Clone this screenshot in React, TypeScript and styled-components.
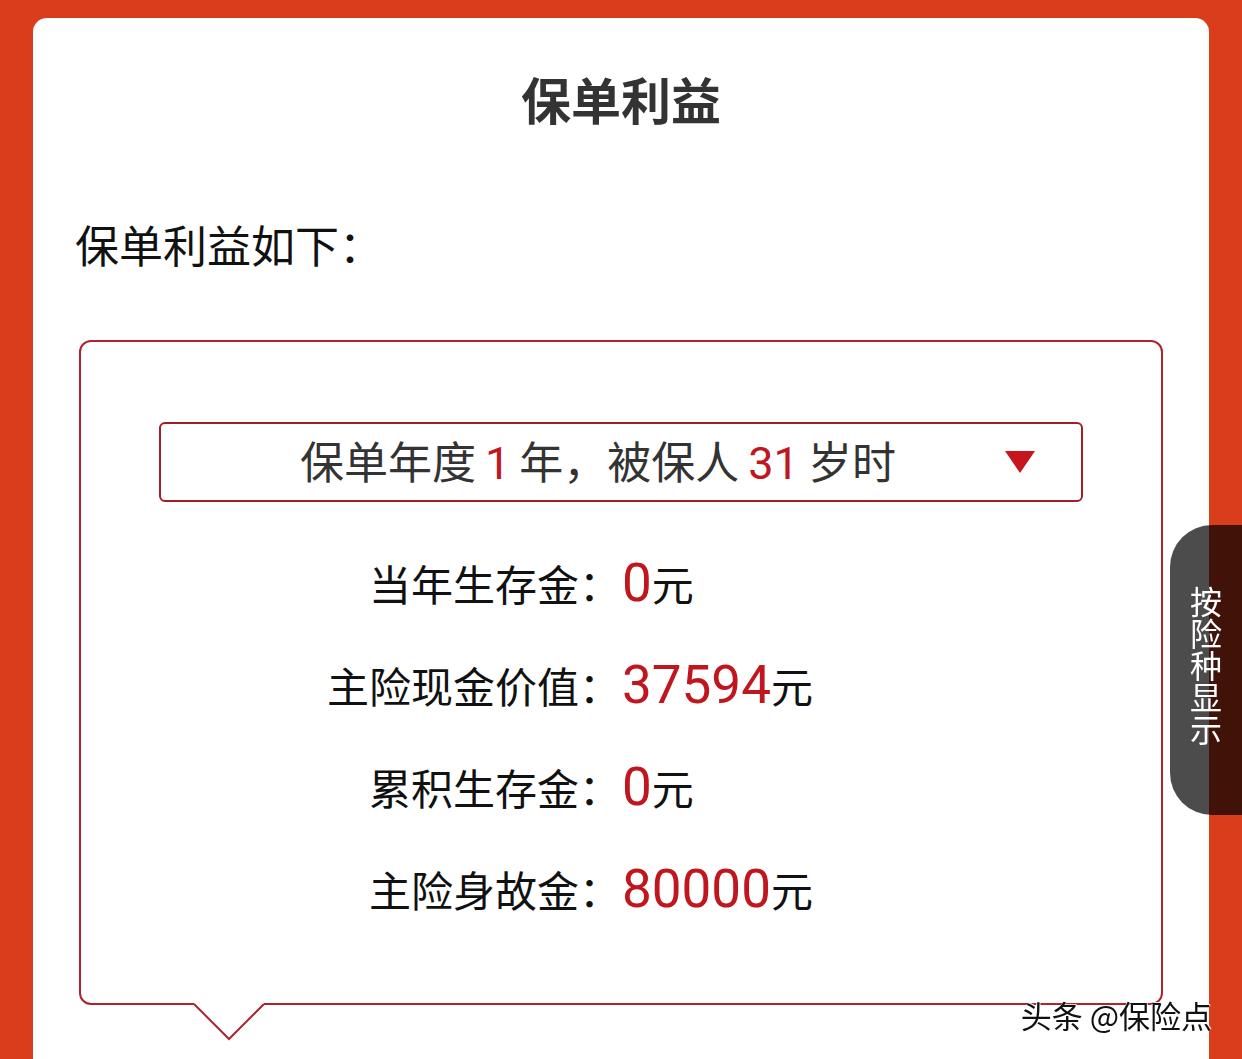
import React from 'react';
import styled, { createGlobalStyle } from 'styled-components';

const GlobalStyle = createGlobalStyle`
  html, body {
    margin: 0;
    padding: 0;
    height: 100%;
    overflow: hidden;
    background: #d93d1c;
  }
  body {
    font-family: "Noto Sans CJK SC", "Noto Sans", sans-serif;
  }
`;

const Page = styled.div`
  padding: 18px 33px 0;
  height: 1059px;
  box-sizing: border-box;
  overflow: hidden;
`;

const Card = styled.section`
  background: #fff;
  border-radius: 14px 14px 0 0;
  padding: 55px 46px 0;
  height: 1041px;
  box-sizing: border-box;
`;

const Title = styled.h1`
  margin: 0;
  text-align: center;
  font-size: 50px;
  line-height: 50px;
  font-weight: 700;
  color: #333;
`;

const Intro = styled.p`
  margin: 99px 0 0 -4px;
  font-size: 44px;
  line-height: 44px;
  color: #111;
`;

const BenefitBox = styled.div`
  position: relative;
  margin-top: 74px;
  border: 2px solid #ad2430;
  border-radius: 12px;
  padding: 80px 78px 63px;
`;

const Notch = styled.svg`
  position: absolute;
  left: 112px;
  bottom: -38px;
  width: 72px;
  height: 38px;
  overflow: visible;
`;

const Select = styled.div`
  height: 80px;
  box-sizing: border-box;
  border: 2px solid #9e1f28;
  border-radius: 6px;
  display: flex;
  align-items: center;
  padding: 0 46px 0 139px;
`;

const SelectText = styled.div`
  flex: 1;
  font-size: 44px;
  line-height: 44px;
  color: #333;
  white-space: nowrap;
`;

const Num = styled.span<{ $gap?: number }>`
  font-family: Roboto, "Noto Sans CJK SC", sans-serif;
  font-size: 45px;
  color: #c0171e;
  margin: 0 ${({ $gap }) => $gap ?? 0}px;
`;

const Arrow = styled.svg`
  width: 30px;
  height: 22px;
  flex-shrink: 0;
`;

const Rows = styled.div`
  margin-top: 30px;
  display: grid;
  grid-template-columns: 1fr 1fr;
  grid-auto-rows: 102px;
  align-items: center;
`;

const Label = styled.div`
  text-align: right;
  font-size: 42px;
  line-height: 42px;
  color: #111;
`;

const Value = styled.div`
  font-size: 42px;
  line-height: 52px;
  color: #111;
  padding-left: 1px;
`;

const Amount = styled.span`
  font-family: Roboto, "Noto Sans CJK SC", sans-serif;
  font-size: 53px;
  color: #c0171e;
`;

const SideTab = styled.div`
  position: fixed;
  right: 0;
  top: 525px;
  width: 72px;
  height: 290px;
  background: rgba(0, 0, 0, 0.7);
  border-radius: 42px 0 0 42px;
  display: flex;
  align-items: center;
  justify-content: center;
`;

const SideText = styled.div`
  writing-mode: vertical-rl;
  font-size: 32px;
  line-height: 32px;
  color: #fff;
  margin-bottom: 8px;
`;

const Watermark = styled.div`
  position: fixed;
  right: 30px;
  bottom: 26px;
  font-size: 31px;
  line-height: 36px;
  color: #111;
  text-shadow: -1px 1px 0 #fff, 1px -1px 0 rgba(255, 255, 255, 0.8);
  white-space: nowrap;
`;

const rows = [
  { label: '当年生存金：', amount: '0' },
  { label: '主险现金价值：', amount: '37594' },
  { label: '累积生存金：', amount: '0' },
  { label: '主险身故金：', amount: '80000' },
];

export default function App() {
  return (
    <>
      <GlobalStyle />
      <Page>
        <Card>
          <Title>保单利益</Title>
          <Intro>保单利益如下：</Intro>
          <BenefitBox>
            <Select>
              <SelectText>
                保单年度<Num $gap={9}>1</Num>年，被保人<Num $gap={9}>31</Num>岁时
              </SelectText>
              <Arrow viewBox="0 0 30 22">
                <polygon points="0,0 30,0 15,22" fill="#c8141b" />
              </Arrow>
            </Select>
            <Rows>
              {rows.map((r) => (
                <React.Fragment key={r.label}>
                  <Label>{r.label}</Label>
                  <Value>
                    <Amount>{r.amount}</Amount>元
                  </Value>
                </React.Fragment>
              ))}
            </Rows>
            <Notch viewBox="0 0 72 38">
              <rect x="1" y="-1" width="70" height="3" fill="#fff" />
              <polyline points="1,1 36,36 71,1" fill="none" stroke="#ad2430" strokeWidth="2" />
            </Notch>
          </BenefitBox>
        </Card>
      </Page>
      <SideTab>
        <SideText>按险种显示</SideText>
      </SideTab>
      <Watermark>头条 @保险点</Watermark>
    </>
  );
}
